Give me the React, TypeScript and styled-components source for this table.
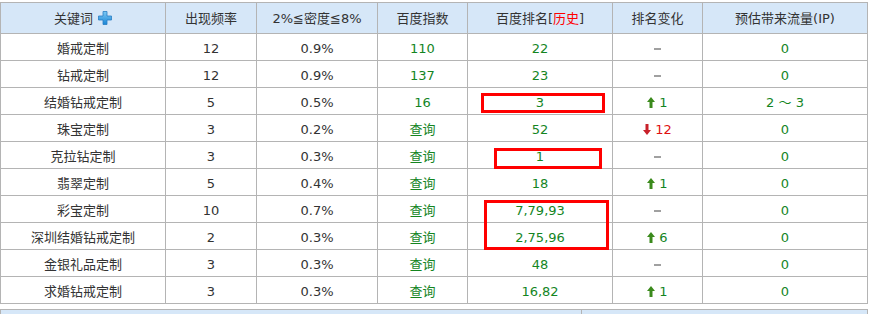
import React from 'react';
import styled, {createGlobalStyle} from "styled-components";

const GlobalStyle = createGlobalStyle`
  body {
    margin: 0;
    background: #fff;
    font-family: "DejaVu Sans", "Noto Sans CJK SC", sans-serif;
    font-size: 13px;
    color: #333;
  }
`

type Trend = {dir: 'up' | 'down' | 'none', value?: number}

type Row = {
    keyword: string
    count: number
    density: string
    index: string
    rank: string
    trend: Trend
    flow: string
}

const rows: Row[] = [
    {keyword: '婚戒定制', count: 12, density: '0.9%', index: '110', rank: '22', trend: {dir: 'none'}, flow: '0'},
    {keyword: '钻戒定制', count: 12, density: '0.9%', index: '137', rank: '23', trend: {dir: 'none'}, flow: '0'},
    {keyword: '结婚钻戒定制', count: 5, density: '0.5%', index: '16', rank: '3', trend: {dir: 'up', value: 1}, flow: '2 ～ 3'},
    {keyword: '珠宝定制', count: 3, density: '0.2%', index: '查询', rank: '52', trend: {dir: 'down', value: 12}, flow: '0'},
    {keyword: '克拉钻定制', count: 3, density: '0.3%', index: '查询', rank: '1', trend: {dir: 'none'}, flow: '0'},
    {keyword: '翡翠定制', count: 5, density: '0.4%', index: '查询', rank: '18', trend: {dir: 'up', value: 1}, flow: '0'},
    {keyword: '彩宝定制', count: 10, density: '0.7%', index: '查询', rank: '7,79,93', trend: {dir: 'none'}, flow: '0'},
    {keyword: '深圳结婚钻戒定制', count: 2, density: '0.3%', index: '查询', rank: '2,75,96', trend: {dir: 'up', value: 6}, flow: '0'},
    {keyword: '金银礼品定制', count: 3, density: '0.3%', index: '查询', rank: '48', trend: {dir: 'none'}, flow: '0'},
    {keyword: '求婚钻戒定制', count: 3, density: '0.3%', index: '查询', rank: '16,82', trend: {dir: 'up', value: 1}, flow: '0'},
]

// red boxes drawn over the rank column
const marks = [
    {left: 481, top: 93, width: 124, height: 20},
    {left: 494, top: 148, width: 108, height: 21},
    {left: 484, top: 200, width: 125, height: 50},
]

const columns = [165, 91, 121, 90, 145, 90, 165]

function PlusIcon() {
    return (
        <svg width="14" height="14" viewBox="0 0 14 14" style={{verticalAlign: '-2px', marginLeft: 5}}>
            <defs>
                <linearGradient id="pl" x1="0" y1="0" x2="0" y2="1">
                    <stop offset="0" stopColor="#7cc8f4"/>
                    <stop offset="1" stopColor="#1a86d6"/>
                </linearGradient>
            </defs>
            <path d="M5 0.5h4v4.5h4.5v4H9v4.5H5V9H0.5V5H5z" fill="url(#pl)" stroke="#2a7fc4" strokeWidth="0.8"/>
        </svg>
    )
}

function Arrow({dir}: {dir: 'up' | 'down'}) {
    const up = dir === 'up'
    return (
        <svg width="8" height="11" viewBox="0 0 8 11" style={{verticalAlign: '-1px', marginRight: 4}}>
            <path
                d={up ? "M4 0L8 5H5.5V11H2.5V5H0z" : "M4 11L8 6H5.5V0H2.5V6H0z"}
                fill={up ? "#3b8a1c" : "#c8202a"}
            />
        </svg>
    )
}

function TrendCell({trend}: {trend: Trend}) {
    if (trend.dir === 'none') return <Dash/>
    return (
        <TrendValue $down={trend.dir === 'down'}>
            <Arrow dir={trend.dir}/>{trend.value}
        </TrendValue>
    )
}

function App() {
    return (
        <Page>
            <GlobalStyle/>
            <Table>
                <colgroup>
                    {columns.map((w, i) => <col key={i} style={{width: w}}/>)}
                </colgroup>
                <thead>
                <tr>
                    <Th>关键词<PlusIcon/></Th>
                    <Th>出现频率</Th>
                    <Th>2%≦密度≦8%</Th>
                    <Th>百度指数</Th>
                    <Th>百度排名[<History>历史</History>]</Th>
                    <Th>排名变化</Th>
                    <Th>预估带来流量(IP)</Th>
                </tr>
                </thead>
                <tbody>
                {rows.map(r => (
                    <tr key={r.keyword}>
                        <Td>{r.keyword}</Td>
                        <Td>{r.count}</Td>
                        <Td>{r.density}</Td>
                        <Td $green>{r.index}</Td>
                        <Td $green>{r.rank}</Td>
                        <Td><TrendCell trend={r.trend}/></Td>
                        <Td $green>{r.flow}</Td>
                    </tr>
                ))}
                </tbody>
            </Table>
            <NextTable>
                <NextCell style={{width: 580}}/>
                <NextCell/>
            </NextTable>
            {marks.map((m, i) => <Mark key={i} style={m}/>)}
        </Page>
    );
}

const Page = styled.div`
  position: relative;
  padding-top: 2px;
  width: 877px;
  height: 314px;
  overflow: hidden;
`

const Table = styled.table`
  border-collapse: collapse;
  table-layout: fixed;
  width: 868px;
  border: 1px solid #b4b4b4;
`

const Th = styled.th`
  box-sizing: border-box;
  height: 31px;
  padding: 2px 0 0;
  line-height: 18px;
  background: #d6e7f8;
  border: 1px solid #b4b4b4;
  font-weight: normal;
  color: #333;
  text-align: center;
  white-space: nowrap;
`

const Td = styled.td<{ $green?: boolean }>`
  box-sizing: border-box;
  height: 27px;
  padding: 3px 0 0;
  line-height: 18px;
  border: 1px solid #b4b4b4;
  text-align: center;
  white-space: nowrap;
  color: ${p => p.$green ? '#14851f' : '#333'};
`

const History = styled.span`
  color: #f00;
`

const Dash = styled.span`
  display: inline-block;
  width: 7px;
  height: 2px;
  background: #a0a0a0;
  vertical-align: middle;
`

const TrendValue = styled.span<{ $down?: boolean }>`
  color: ${p => p.$down ? '#e01010' : '#14851f'};
`

const NextTable = styled.div`
  display: flex;
  margin-top: 5px;
  width: 866px;
  height: 30px;
  border: 1px solid #b4b4b4;
  background: #d6e7f8;
`

const NextCell = styled.div`
  border-right: 1px solid #b4b4b4;
  &:last-child {
    border-right: none;
    flex: 1;
  }
`

const Mark = styled.div`
  position: absolute;
  box-sizing: border-box;
  border: 3px solid #f00;
`

export default App;
